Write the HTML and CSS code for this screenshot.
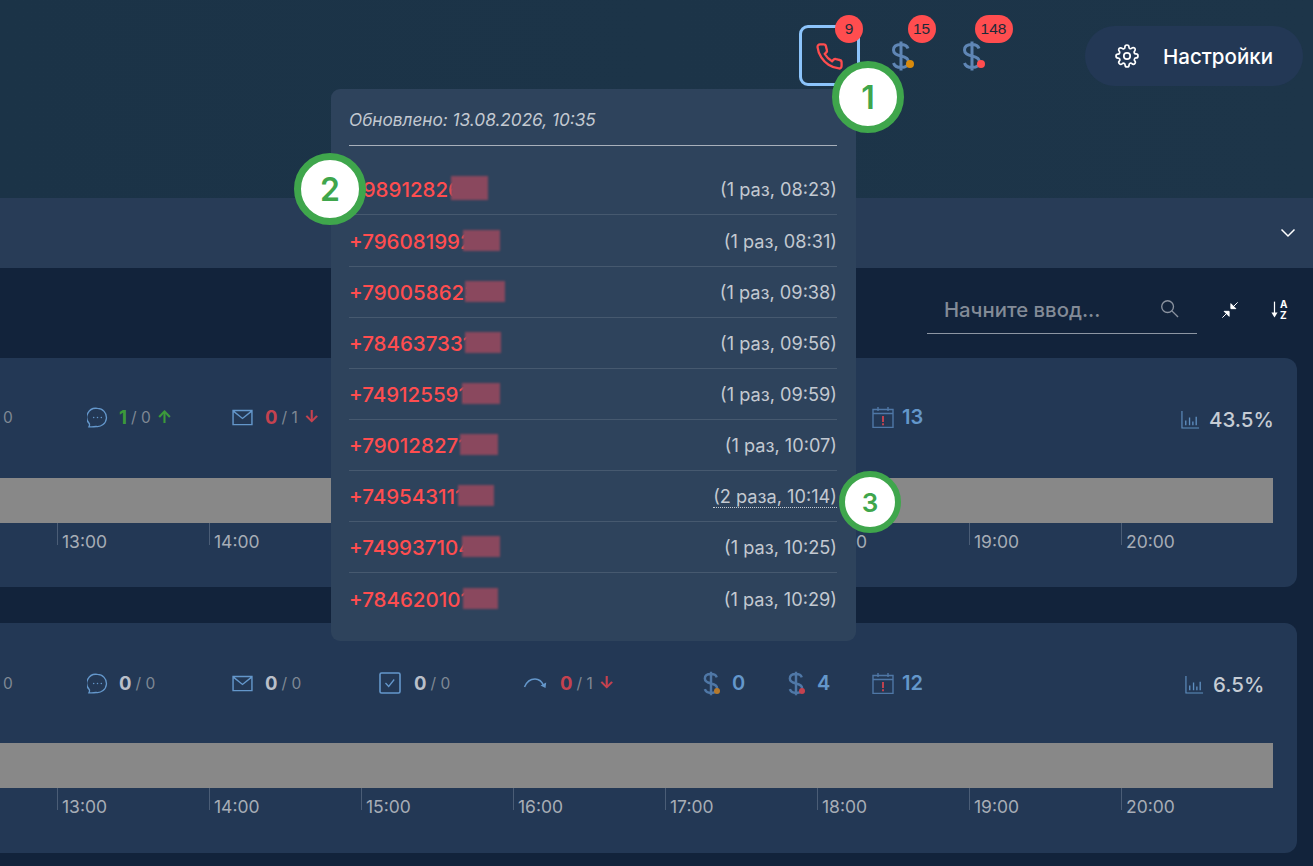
FILE: index.html
```html
<!DOCTYPE html>
<html lang="ru">
<head>
<meta charset="utf-8">
<title>Звонки</title>
<link rel="stylesheet" href="styles.css">
</head>
<body>
<svg class="defs" width="0" height="0" aria-hidden="true">
  <symbol id="i-dollar" viewBox="0 0 22 30"><path d="M18 7.500C17 4.500 14.500 3.500 11 3.500 6.500 3.500 3.500 5.500 3.500 9S6.500 14 11 15c4.500 1 7.500 2.500 7.500 6s-3 5.500-7.500 5.500c-3.500 0-6.500-1.500-7.500-4.500M11 .5v29" fill="none" stroke="currentColor" stroke-width="3"/></symbol>
  <symbol id="i-comment" viewBox="0 0 22 22"><path d="M11 1.500a9.500 9.500 0 1 1-1.500 18.900c-2 .4-5 .6-7.500 .3 .6-1 .8-2 .5-3.200A9.500 9.500 0 0 1 11 1.500Z" fill="none" stroke="currentColor" stroke-width="1.400"/><circle cx="7" cy="11" r=".8" fill="currentColor"/><circle cx="11" cy="11" r=".8" fill="currentColor"/><circle cx="15" cy="11" r=".8" fill="currentColor"/></symbol>
  <symbol id="i-mail" viewBox="0 0 22 18"><path d="M1 1.500h20v15H1zM1 2l10 8 10-8" fill="none" stroke="currentColor" stroke-width="1.500"/></symbol>
  <symbol id="i-check" viewBox="0 0 22 22"><rect x="1" y="1" width="20" height="20" rx="1.500" fill="none" stroke="currentColor" stroke-width="1.600"/><path d="M6.500 11l3.200 3.500 5.500-7" fill="none" stroke="currentColor" stroke-width="1.300"/></symbol>
  <symbol id="i-redo" viewBox="0 0 24 14"><path d="M1.500 11C4 5 8 3 12 3c4 0 7 2.500 9 7" fill="none" stroke="currentColor" stroke-width="1.500"/><path d="M17.500 9.500l5 2.500 .7-5.500z" fill="currentColor"/></symbol>
  <symbol id="i-cal" viewBox="0 0 22 22"><path d="M1 3.500h20v18H1zM1 7.500h20M6 1v4M16 1v4" fill="none" stroke="#4f77a6" stroke-width="1.400"/><path d="M11 10v6M11 17.300v2" stroke="#d0444f" stroke-width="1.800"/></symbol>
  <symbol id="i-chart" viewBox="0 0 20 20"><path d="M1 1v18h18" fill="none" stroke="currentColor" stroke-width="1.200"/><path d="M5 16v-5M9 16V8M12.500 16v-4M16 16V7" fill="none" stroke="currentColor" stroke-width="1.400"/></symbol>
</svg>

<div class="page">
  <header class="top">
    <div class="alerts">
      <button class="alert alert-active">
        <svg class="phone-icon" viewBox="0 0 24 24"><path d="M22 16.900v3a2 2 0 0 1-2.200 2 19.800 19.800 0 0 1-8.600-3.100 19.500 19.500 0 0 1-6-6A19.800 19.800 0 0 1 2.100 4.200 2 2 0 0 1 4.100 2h3a2 2 0 0 1 2 1.700c.1 1 .4 1.900.7 2.800a2 2 0 0 1-.5 2.100L8.100 9.900a16 16 0 0 0 6 6l1.300-1.300a2 2 0 0 1 2.100-.4c.9.300 1.800.6 2.800.7a2 2 0 0 1 1.700 2z"/></svg>
        <span class="badge badge-phone">9</span>
      </button>
      <button class="alert">
        <svg class="dollar-big"><use href="#i-dollar"/></svg><span class="dot dot-orange"></span>
        <span class="badge badge-round">15</span>
      </button>
      <button class="alert">
        <svg class="dollar-big"><use href="#i-dollar"/></svg><span class="dot dot-red"></span>
        <span class="badge badge-pill">148</span>
      </button>
    </div>
    <button class="settings">
      <svg class="gear" viewBox="0 0 24 24"><circle cx="12" cy="12" r="3.200"/><path d="M19.400 15a1.650 1.650 0 0 0 .33 1.820l.06.06a2 2 0 1 1-2.830 2.830l-.06-.06a1.650 1.650 0 0 0-2.800 1.170V21a2 2 0 0 1-4 0v-.09A1.650 1.650 0 0 0 7.300 19.700l-.06.06a2 2 0 1 1-2.830-2.830l.06-.06a1.650 1.650 0 0 0-1.170-2.800H3a2 2 0 0 1 0-4h.09A1.650 1.650 0 0 0 4.300 7.300l-.06-.06a2 2 0 1 1 2.830-2.830l.06.06a1.650 1.650 0 0 0 2.800-1.170V3a2 2 0 0 1 4 0v.09a1.650 1.650 0 0 0 2.800 1.170l.06-.06a2 2 0 1 1 2.830 2.830l-.06.06a1.650 1.650 0 0 0 1.170 2.800H21a2 2 0 0 1 0 4h-.09a1.650 1.650 0 0 0-1.510 1.110z"/></svg>
      <span>Настройки</span>
    </button>
  </header>

  <div class="filter-bar">
    <svg class="chevron" viewBox="0 0 16 10"><path d="M1.500 1.500L8 8l6.500-6.500"/></svg>
  </div>

  <div class="toolbar">
    <div class="search">
      <span class="search-text">Начните ввод...</span>
      <svg class="search-icon" viewBox="0 0 20 20"><circle cx="8" cy="8" r="6.200"/><path d="M12.500 12.500L19 19"/></svg>
    </div>
    <svg class="collapse" viewBox="0 0 20 20"><path d="M1.500 18.500l5.500-5.500M3.500 11.500h5.500v5.500z" class="collapse-arrow"/><path d="M18.500 1.500L13 7M16.500 8.500H11V3z" class="collapse-arrow"/></svg>
    <div class="sort">
      <svg class="sort-arrow" viewBox="0 0 8 20"><path d="M4 1v14"/><path class="sort-head" d="M.5 13.500h7L4 19z"/></svg>
      <div class="sort-letters"><span>A</span><span>Z</span></div>
    </div>
  </div>

  <section class="card">
    <div class="stats">
      <div class="stat stat-a"><span class="muted">0</span></div>
      <div class="stat stat-b"><svg class="ico ico-comment"><use href="#i-comment"/></svg><b class="val green">1</b><span class="muted">/ 0</span><span class="arrow green">↑</span></div>
      <div class="stat stat-c"><svg class="ico ico-mail"><use href="#i-mail"/></svg><b class="val red">0</b><span class="muted">/ 1</span><span class="arrow red">↓</span></div>
      <div class="stat stat-d"><svg class="ico ico-check"><use href="#i-check"/></svg><b class="val">0</b><span class="muted">/ 0</span></div>
      <div class="stat stat-e"><svg class="ico ico-redo"><use href="#i-redo"/></svg><b class="val red">0</b><span class="muted">/ 1</span><span class="arrow red">↓</span></div>
      <div class="stat stat-f"><span class="small-dollar"><svg class="dollar-small"><use href="#i-dollar"/></svg><span class="dot-s dot-orange-s"></span></span><b class="blue">0</b></div>
      <div class="stat stat-f"><span class="small-dollar"><svg class="dollar-small"><use href="#i-dollar"/></svg><span class="dot-s dot-red-s"></span></span><b class="blue">4</b></div>
      <div class="stat stat-g"><svg class="ico ico-cal"><use href="#i-cal"/></svg><b class="blue">13</b></div>
      <div class="percent percent-1"><svg class="ico-chart"><use href="#i-chart"/></svg><span>43.5%</span></div>
    </div>
    <div class="bar"></div>
    <div class="ticks">
      <span class="tick">13:00</span><span class="tick">14:00</span><span class="tick">15:00</span><span class="tick">16:00</span><span class="tick">17:00</span><span class="tick">18:00</span><span class="tick">19:00</span><span class="tick">20:00</span>
    </div>
  </section>

  <section class="card">
    <div class="stats">
      <div class="stat stat-a"><span class="muted">0</span></div>
      <div class="stat stat-b"><svg class="ico ico-comment"><use href="#i-comment"/></svg><b class="val">0</b><span class="muted">/ 0</span></div>
      <div class="stat stat-c"><svg class="ico ico-mail"><use href="#i-mail"/></svg><b class="val">0</b><span class="muted">/ 0</span></div>
      <div class="stat stat-d"><svg class="ico ico-check"><use href="#i-check"/></svg><b class="val">0</b><span class="muted">/ 0</span></div>
      <div class="stat stat-e"><svg class="ico ico-redo"><use href="#i-redo"/></svg><b class="val red">0</b><span class="muted">/ 1</span><span class="arrow red">↓</span></div>
      <div class="stat stat-f"><span class="small-dollar"><svg class="dollar-small"><use href="#i-dollar"/></svg><span class="dot-s dot-orange-s"></span></span><b class="blue">0</b></div>
      <div class="stat stat-f"><span class="small-dollar"><svg class="dollar-small"><use href="#i-dollar"/></svg><span class="dot-s dot-red-s"></span></span><b class="blue">4</b></div>
      <div class="stat stat-g"><svg class="ico ico-cal"><use href="#i-cal"/></svg><b class="blue">12</b></div>
      <div class="percent percent-2"><svg class="ico-chart"><use href="#i-chart"/></svg><span>6.5%</span></div>
    </div>
    <div class="bar"></div>
    <div class="ticks">
      <span class="tick">13:00</span><span class="tick">14:00</span><span class="tick">15:00</span><span class="tick">16:00</span><span class="tick">17:00</span><span class="tick">18:00</span><span class="tick">19:00</span><span class="tick">20:00</span>
    </div>
  </section>

  <aside class="popup">
    <div class="popup-head">Обновлено: 13.08.2026, 10:35</div>
    <ul class="calls">
      <li class="call"><span class="num">+98912826<i class="blur blur-tall" style="left:102px;width:37px"></i></span><span class="when">(1 раз, 08:23)</span></li>
      <li class="call"><span class="num">+796081992<i class="blur" style="left:114px;width:37px"></i></span><span class="when">(1 раз, 08:31)</span></li>
      <li class="call"><span class="num">+790058623<i class="blur" style="left:116px;width:40px"></i></span><span class="when">(1 раз, 09:38)</span></li>
      <li class="call"><span class="num">+784637331<i class="blur" style="left:116px;width:36px"></i></span><span class="when">(1 раз, 09:56)</span></li>
      <li class="call"><span class="num">+749125591<i class="blur" style="left:113px;width:38px"></i></span><span class="when">(1 раз, 09:59)</span></li>
      <li class="call"><span class="num">+790128271<i class="blur" style="left:111px;width:38px"></i></span><span class="when">(1 раз, 10:07)</span></li>
      <li class="call"><span class="num">+749543111<i class="blur" style="left:109px;width:36px"></i></span><span class="when when-dotted">(2 раза, 10:14)</span></li>
      <li class="call"><span class="num">+749937104<i class="blur" style="left:113px;width:38px"></i></span><span class="when">(1 раз, 10:25)</span></li>
      <li class="call"><span class="num">+784620101<i class="blur" style="left:114px;width:35px"></i></span><span class="when">(1 раз, 10:29)</span></li>
    </ul>
  </aside>

  <span class="marker marker-1">1</span>
  <span class="marker marker-2">2</span>
  <span class="marker marker-3">3</span>
</div>
</body>
</html>
```

FILE: styles.css
```css
* { box-sizing: border-box; }
html, body { margin: 0; padding: 0; height: 100%; }
body {
  background: #12233b;
  font-family: Inter, "Liberation Sans", sans-serif;
  overflow: hidden;
}
.defs { position: absolute; }
.page { position: relative; width: 1313px; height: 866px; overflow: hidden; }

/* header */
.top {
  height: 198px;
  background: linear-gradient(90deg, #1b3347 0%, #1d3549 100%);
  display: flex;
  justify-content: flex-end;
  align-items: flex-start;
  padding: 25px 10px 0 0;
}
.alerts { display: flex; gap: 10px; }
.alert {
  position: relative;
  width: 61px;
  height: 61px;
  background: none;
  border: 3px solid transparent;
  border-radius: 9px;
  padding: 0;
  display: flex;
  align-items: center;
  justify-content: center;
  color: #5f86b5;
}
.alert-active { border-color: #8cc4fb; }
.phone-icon { width: 29px; height: 29px; fill: none; stroke: #ff4d4f; stroke-width: 1.9; transform: translateY(1px); }
.dollar-big { width: 22px; height: 30px; color: #5f86b5; }
.badge {
  position: absolute;
  top: -13px;
  height: 28px;
  border-radius: 14px;
  background: #ff4d4f;
  color: #1d2a38;
  font-size: 15.5px;
  line-height: 28px;
  text-align: center;
}
.badge-phone { width: 28px; left: 33px; }
.badge-round { width: 28px; left: 34.500px; }
.badge-pill { width: 38px; left: 30.500px; }
.dot { position: absolute; width: 8px; height: 8px; border-radius: 50%; left: 33px; top: 32px; }
.dot-orange { background: #d98a0b; }
.dot-red { background: #ff4d4f; }

.settings {
  margin-left: 83px;
  margin-top: 1px;
  width: 218px;
  height: 60px;
  border: 0;
  border-radius: 30px;
  background: #233855;
  color: #fff;
  display: flex;
  align-items: center;
  padding: 0 0 0 30px;
  font: 500 20.5px Inter, "Liberation Sans", sans-serif;
  gap: 24px;
}
.gear { width: 24px; height: 24px; fill: none; stroke: #fff; stroke-width: 1.7; }

/* filter bar */
.filter-bar {
  height: 70px;
  background: #283c57;
  display: flex;
  align-items: center;
  justify-content: flex-end;
  padding-right: 17px;
}
.chevron { width: 16px; height: 10px; fill: none; stroke: #fff; stroke-width: 1.5; }

/* toolbar */
.toolbar {
  height: 90px;
  display: flex;
  align-items: flex-start;
  justify-content: flex-end;
  padding: 21px 25px 0 0;
}
.search {
  width: 270px;
  height: 45px;
  border-bottom: 1px solid #8d96a3;
  display: flex;
  align-items: center;
  justify-content: space-between;
  padding: 0 18px 3px 17px;
}
.search-text { font-size: 20.3px; font-weight: 500; color: #838b97; }
.search-icon { width: 19px; height: 19px; fill: none; stroke: #8b93a0; stroke-width: 1.4; margin: -2px 0 0; }
.collapse { width: 18px; height: 18px; margin: 12px 0 0 24px; }
.collapse-arrow { fill: #fff; stroke: #fff; stroke-width: 1.1; }
.sort { display: flex; margin: 10px 0 0 32px; gap: 2px; width: 17px; }
.sort-arrow { width: 7px; height: 21px; fill: none; stroke: #fff; stroke-width: 1.4; }
.sort-head { fill: #fff; stroke: none; }
.sort-letters { display: flex; flex-direction: column; font-size: 10px; font-weight: 700; color: #fff; line-height: 10.500px; }

/* cards */
.card {
  height: 229px;
  margin: 0 16px 36px -20px;
  background: #233855;
  border-radius: 12px;
  padding: 0 24px 0 20px;
}
.card + .card { height: 230px; }
.stats {
  height: 120px;
  display: flex;
  align-items: center;
  padding: 0 0 2px 3px;
  font-size: 14px;
}
.card + .card .stats { padding-bottom: 0; }
.stat { display: flex; align-items: center; flex: none; height: 24px; }
.stat-a { width: 84px; }
.stat-b { width: 145px; }
.stat-c { width: 147px; }
.stat-d { width: 144px; }
.stat-e { width: 179px; }
.stat-f { width: 85px; }
.stat-g { width: 309px; }
.muted { color: #7f8894; font-size: 15.5px; white-space: pre; }
.val { font-size: 18.5px; font-weight: 700; color: #b9bfc9; margin-right: 4px; }
.arrow { font-size: 17px; font-weight: 700; margin-left: 6px; }
.green { color: #3c9a3a; }
.red { color: #c5424f; }
.blue { color: #6497cb; font-size: 20px; font-weight: 600; }
.ico { flex: none; color: #6497cb; margin-right: 11px; }
.ico-comment { width: 21px; height: 21px; }
.ico-mail { width: 21px; height: 17px; margin-right: 12px; }
.ico-check { width: 22px; height: 22px; margin-right: 13px; }
.ico-redo { width: 24px; height: 14px; margin-right: 13px; }
.ico-cal { width: 22px; height: 22px; margin-right: 8px; }
.small-dollar { position: relative; display: block; width: 18px; height: 25px; margin-right: 12px; }
.dollar-small { width: 18px; height: 25px; color: #4f77a6; display: block; }
.dot-s { position: absolute; width: 6px; height: 6px; border-radius: 50%; left: 12px; top: 17px; }
.dot-orange-s { background: #b5792c; }
.dot-red-s { background: #c5424f; }
.percent { display: flex; align-items: center; gap: 9px; color: #c6ccd4; font-size: 20.5px; font-weight: 500; flex: none; padding-top: 4px; }
.percent-2 { margin-left: 4px; padding-top: 2px; }
.ico-chart { width: 19px; height: 19px; color: #5f8fc0; }
.bar { height: 45px; background: #888; }
.ticks { display: flex; padding-left: 57px; }
.tick {
  flex: none;
  width: 152px;
  height: 22px;
  border-left: 1px solid #4b5d76;
  padding: 9px 0 0 4px;
  font-size: 17.5px;
  line-height: 20px;
  color: #a7adb6;
  white-space: nowrap;
}

/* popup */
.popup {
  position: absolute;
  left: 331px;
  top: 89px;
  width: 525px;
  height: 552px;
  background: #2e435c;
  border-radius: 9px;
  padding: 0 19px 0 18px;
}
.popup-head {
  height: 57px;
  border-bottom: 1px solid #a8b0bb;
  padding-top: 21px;
  font-size: 17.2px;
  line-height: 20px;
  font-style: italic;
  color: #c3c9d1;
}
.calls { list-style: none; margin: 0; padding: 0; }
.call {
  height: 51px;
  border-bottom: 1px solid #46596f;
  display: flex;
  align-items: center;
  justify-content: space-between;
}
.call:first-child { height: 69px; padding-top: 17px; }
.call:nth-child(2) { height: 52px; }
.call:last-child { border-bottom: 0; }
.num { position: relative; top: 1px; color: #ff4d4f; font-size: 20.5px; line-height: 24px; font-weight: 500; white-space: nowrap; }
.blur {
  position: absolute;
  top: 0;
  height: 21px;
  background: #8a485e;
  filter: blur(1.2px);
}
.blur-tall { top: -2px; height: 24px; }
.when { color: #c3c9d1; font-size: 18.2px; line-height: 22px; white-space: nowrap; }
.when-dotted { border-bottom: 1px dotted #c3c9d1; }

/* markers */
.marker {
  position: absolute;
  border-radius: 50%;
  background: #fff;
  border: 7px solid #3fa64c;
  color: #3fa64c;
  font-weight: 600;
  display: flex;
  align-items: center;
  justify-content: center;
}
.marker-1 { left: 832px; top: 61px; width: 72px; height: 72px; font-size: 32px; }
.marker-2 { left: 294px; top: 153px; width: 72px; height: 72px; font-size: 32px; }
.marker-3 { left: 839px; top: 471px; width: 62px; height: 62px; font-size: 26px; border-width: 6px; }
```
